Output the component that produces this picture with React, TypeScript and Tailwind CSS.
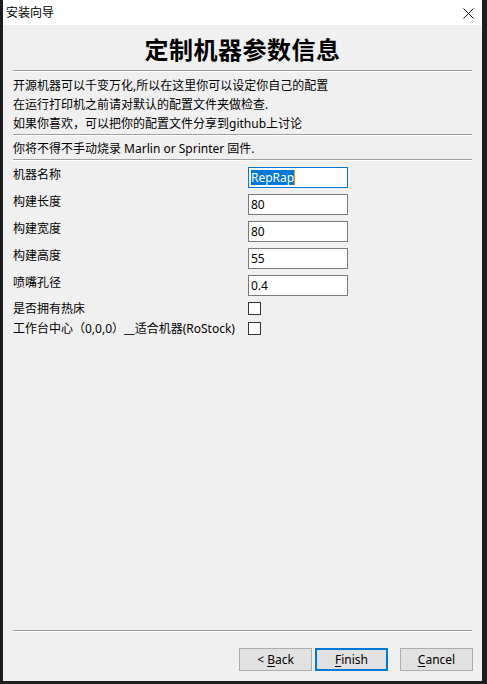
import React from "react";

const FONT = { fontFamily: '"Noto Sans", "Noto Sans CJK SC", sans-serif' };

const FIELDS = [
  { label: "机器名称", value: "RepRap", focused: true },
  { label: "构建长度", value: "80" },
  { label: "构建宽度", value: "80" },
  { label: "构建高度", value: "55" },
  { label: "喷嘴孔径", value: "0.4" },
];

const CHECKS = ["是否拥有热床", "工作台中心（0,0,0）__适合机器(RoStock)"];

function Separator({ className = "" }: { className?: string }) {
  return <div className={`h-[2px] border-t border-[#a0a0a0] border-b border-b-white ${className}`} />;
}

function TextField({ value, focused }: { value: string; focused?: boolean }) {
  return (
    <div
      className={`flex h-[21px] w-[100px] items-center bg-white pl-[2px] text-[12px] text-black ${
        focused ? "border border-[#0078d7]" : "border border-[#7a7a7a]"
      }`}
    >
      {focused ? (
        <>
          <span className="bg-[#0078d7] leading-[15px] text-white">{value}</span>
          <span className="h-[15px] w-px bg-[#ff8a00]" />
        </>
      ) : (
        <span className="leading-[15px]">{value}</span>
      )}
    </div>
  );
}

function WizardButton({
  mnemonic,
  rest,
  prefix = "",
  primary,
  className = "",
}: {
  mnemonic: string;
  rest: string;
  prefix?: string;
  primary?: boolean;
  className?: string;
}) {
  return (
    <button
      className={`flex h-[23px] w-[73px] items-center justify-center whitespace-pre bg-[#e1e1e1] text-[12px] text-black ${
        primary ? "border-2 border-[#0078d7]" : "border border-[#adadad]"
      } ${className}`}
    >
      {prefix}
      <span className="underline underline-offset-2">{mnemonic}</span>
      {rest}
    </button>
  );
}

export default function App() {
  return (
    <div className="h-[684px] w-[487px] bg-[#1d1d1f] pl-[3px]" style={FONT}>
      <div className="flex h-[681px] w-[479px] flex-col bg-[#f0f0f0]">
        {/* title bar */}
        <div className="flex h-[25px] items-center justify-between bg-white pl-[3px] pr-[7px] pt-[1px]">
          <span className="text-[12px] leading-none text-black">安装向导</span>
          <svg width="11" height="11" viewBox="0 0 11 11" className="mr-[1px]">
            <path d="M0.5 0.5 L10.5 10.5 M10.5 0.5 L0.5 10.5" stroke="#111" strokeWidth="1" />
          </svg>
        </div>

        <div className="flex flex-1 flex-col px-[10px] text-[12px] text-black">
          <div className="flex h-[45px] items-center justify-center pt-[5px]">
            <h1 className="text-[24px] font-bold leading-none tracking-[0.5px]">定制机器参数信息</h1>
          </div>
          <Separator />

          <div className="pt-[4px] leading-[19px]">
            <div>开源机器可以千变万化,所以在这里你可以设定你自己的配置</div>
            <div>在运行打印机之前请对默认的配置文件夹做检查.</div>
            <div>如果你喜欢，可以把你的配置文件分享到github上讨论</div>
          </div>
          <Separator className="mt-[1px]" />

          <div className="pt-[3px] leading-[19px]">你将不得不手动烧录 Marlin or Sprinter 固件.</div>
          <Separator className="mt-[1px]" />

          <div className="mt-[6px] flex flex-col gap-[6px]">
            {FIELDS.map((f) => (
              <div key={f.label} className="flex items-start">
                <div className="w-[235px] leading-[16px]">{f.label}</div>
                <TextField value={f.value} focused={f.focused} />
              </div>
            ))}
          </div>

          <div className="mt-[4px] flex flex-col gap-[3px]">
            {CHECKS.map((c) => (
              <div key={c} className="flex h-[17px] items-center">
                <div className="w-[235px] whitespace-nowrap leading-[16px]">{c}</div>
                <div className="h-[13px] w-[13px] border border-[#333] bg-white" />
              </div>
            ))}
          </div>

          <div className="flex-1" />
          <Separator />

          <div className="mt-[16px] mb-[10px] -mr-[1px] flex justify-end">
            <WizardButton prefix="< " mnemonic="B" rest="ack" />
            <WizardButton mnemonic="F" rest="inish" primary className="ml-[3px]" />
            <WizardButton mnemonic="C" rest="ancel" className="ml-[12px]" />
          </div>
        </div>
      </div>
    </div>
  );
}
